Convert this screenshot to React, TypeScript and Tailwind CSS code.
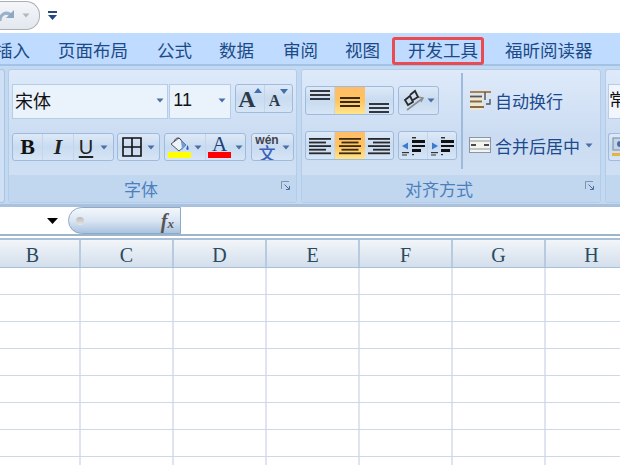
import React from "react";

const CJK = { fontFamily: '"Noto Sans CJK SC", "Liberation Sans", sans-serif' };
const SERIF = { fontFamily: '"Liberation Serif", serif' };

const Caret = ({ c = "#4a6fa5" }: { c?: string }) => (
  <svg width="8" height="5" viewBox="0 0 8 5" className="shrink-0"><path d="M0.5 0.5h7L4 4.5z" fill={c} /></svg>
);

const Btn = ({ children, w, on = false, edge = false }: { children?: React.ReactNode; w: string; on?: boolean; edge?: boolean }) => (
  <div className={`${w} h-full flex items-center justify-center shrink-0 ${on ? "bg-gradient-to-b from-[#ffbd69] via-[#ffc35e] to-[#ffe58a]" : ""} ${edge ? "border-r border-[#c2d5ec]" : ""}`}>{children}</div>
);

const Group = ({ children, cls = "" }: { children: React.ReactNode; cls?: string }) => (
  <div className={`h-[28px] flex items-center rounded-[3px] border border-[#9ebbdd] bg-gradient-to-b from-[#dde9f7] via-[#c9dbf0] to-[#d6e5f6] overflow-hidden shrink-0 ${cls}`}>{children}</div>
);

const Lines = ({ kind, heavy = false }: { kind: "l" | "c" | "r"; heavy?: boolean }) => {
  const rows = [0, 1, 2, 3, 4];
  return (
    <svg width="24" height="18" viewBox="0 0 24 18">
      {rows.map((i) => {
        const w = i % 2 === 0 ? 22 : 17;
        const x = kind === "l" ? 1 : kind === "c" ? 12 - w / 2 : 23 - w;
        return <rect key={i} x={x} y={i * 3.6 + 1} width={w} height="1.8" fill={heavy ? "#3a2a10" : "#26282c"} />;
      })}
    </svg>
  );
};

const VAlign = ({ pos, tone = "#33363c" }: { pos: "t" | "m" | "b"; tone?: string }) => (
  <div className={`h-full flex flex-col gap-[2px] ${pos === "t" ? "justify-start pt-[3px]" : pos === "m" ? "justify-center pt-[3px]" : "justify-end pb-[1px]"}`}>
    <div className="w-[20px] h-[2px]" style={{ background: tone }} />
    <div className="w-[20px] h-[2px]" style={{ background: tone }} />
    <div className="w-[20px] h-[2px]" style={{ background: tone }} />
  </div>
);

const Indent = ({ dir }: { dir: "l" | "r" }) => (
  <svg width="24" height="20" viewBox="0 0 24 20">
    <path d={dir === "l" ? "M1 10l6-3.5v7z" : "M8 10L2 6.5v7z"} fill="#3d7ad0" />
    <rect x="11" y="1" width="4" height="1.5" fill="#333" />
    <rect x="11" y="4" width="13" height="3" fill="#111" />
    <rect x="11" y="9" width="13" height="2" fill="#111" />
    <rect x="11" y="13" width="9" height="3" fill="#111" />
    <rect x="1" y="16" width="7" height="1.2" fill="#333" />
    <rect x="11" y="18" width="2" height="1.2" fill="#333" />
    <rect x="1" y="18.5" width="5" height="1" fill="#333" />
  </svg>
);

const Launcher = () => (
  <svg width="10" height="10" viewBox="0 0 10 10" className="shrink-0">
    <path d="M0.5 8V0.5H8" fill="none" stroke="#7f93ab" />
    <path d="M3.5 3.5L8 8M5 8.5h3.5V5" fill="none" stroke="#4a6f9f" />
  </svg>
);

const PanelLabel = ({ text, pad }: { text: string; pad: string }) => (
  <div className={`h-[27px] bg-[#c0d7ef] flex items-center justify-center relative rounded-b-[3px] ${pad}`} style={CJK}>
    <span className="text-[17px] text-[#4c80bd] leading-none">{text}</span>
    <div className="absolute right-[5px] top-[6px]"><Launcher /></div>
  </div>
);

const tabs: [string, string][] = [
  ["插入", "w-[35px] ml-[-5px] mr-[28px]"],
  ["页面布局", "w-[70px] mr-[29px]"],
  ["公式", "w-[35px] mr-[27px]"],
  ["数据", "w-[35px] mr-[29px]"],
  ["审阅", "w-[35px] mr-[27px]"],
  ["视图", "w-[35px] mr-[28px]"],
  ["开发工具", "w-[70px] mr-[27px]"],
  ["福昕阅读器", "w-[88px]"],
];

const cols = [
  ["B", "w-[81px] pr-[14px]"], ["C", "w-[93px]"], ["D", "w-[93px]"], ["E", "w-[93px]"], ["F", "w-[93px]"], ["G", "w-[93px]"], ["H", "w-[93px]"],
];

const cellCols = ["w-[81px]", "w-[93px]", "w-[93px]", "w-[93px]", "w-[93px]", "w-[93px]", "w-[93px]"];

export default function App() {
  return (
    <div className="w-[620px] h-[465px] overflow-hidden bg-white flex flex-col" style={CJK}>
      {/* quick access */}
      <div className="h-[33px] shrink-0 flex items-start bg-white">
        <div className="w-[40px] h-[29px] mt-px rounded-r-[14px] border border-l-0 border-[#aab0b8] bg-gradient-to-b from-[#f4f6f9] to-[#e3e8ef] flex items-center gap-[7px]">
          <svg width="15" height="15" viewBox="0 0 15 15"><path d="M0 13C0 6 6 3 11 7" fill="none" stroke="#9ab2c9" strokeWidth="3" /><path d="M14 2v8H6z" fill="#8ea8c2" /></svg>
          <Caret c="#b4b8bd" />
        </div>
        <div className="ml-[7px] mt-[11px] flex flex-col gap-[2px] items-center w-[10px]">
          <div className="w-[9px] h-[2px] bg-[#26477f]" />
          <svg width="9" height="5" viewBox="0 0 9 5"><path d="M0 0h9L4.5 5z" fill="#26477f" /></svg>
        </div>
      </div>

      {/* tabs */}
      <div className="h-[33px] shrink-0 bg-[#bfdbff] border-b-2 border-[#a3c2e8] flex items-center text-[#1c4a86] text-[17.5px] relative">
        {tabs.map(([t, c]) => (
          <div key={t} className={`${c} shrink-0 whitespace-nowrap leading-none pt-[2px]`}>{t}</div>
        ))}
        <div className="absolute left-[392px] top-[4px] w-[92px] h-[28px] border-[3px] border-[#ea4b50] rounded-[3px]" />
      </div>

      {/* ribbon */}
      <div className="h-[141px] shrink-0 bg-[#c3d9f2] border-b-[3px] border-[#a9c1dc] flex pt-[3px] pb-[1px] gap-[3px]">
        <div className="w-[5px] shrink-0 rounded-r-[3px] border border-l-0 border-[#a9c5e6] bg-[#cfe0f4]" />
        <div className="w-[289px] shrink-0 rounded-[3px] border border-[#b3cce8] bg-gradient-to-b from-[#deeafa] via-[#cbdcf2] to-[#d2e2f5] flex flex-col">
          <div className="flex-1 px-[3px] pt-[14px] flex flex-col gap-[14px]">
            <div className="flex items-start">
              <div className="w-[157px] h-[35px] bg-[#eaf2fc] border border-[#b6cde8] flex items-center justify-between pl-[2px] pr-[3px] pb-[3px] text-[18px] text-[#111]">
                <span className="leading-none">宋体</span><Caret />
              </div>
              <div className="w-[62px] h-[35px] ml-px bg-[#eaf2fc] border border-[#b6cde8] flex items-center justify-between pl-[3px] pr-[4px] pb-[3px] text-[18px] text-[#111]">
                <span className="leading-none" style={{ fontFamily: '"Liberation Sans", sans-serif' }}>11</span><Caret />
              </div>
              <Group cls="ml-[4px] h-[29px]">
                <Btn w="w-[29px]" edge>
                  <span className="text-[24px] font-bold leading-none text-[#2b3a4a]" style={SERIF}>A</span>
                  <svg width="8" height="5" viewBox="0 0 8 5" className="-mt-[16px] -ml-[2px]"><path d="M0 5h8L4 0z" fill="#3f6fae" /></svg>
                </Btn>
                <Btn w="w-[27px]">
                  <span className="text-[16px] font-bold leading-none text-[#2b3a4a] mt-[4px]" style={SERIF}>A</span>
                  <svg width="8" height="5" viewBox="0 0 8 5" className="-mt-[14px]"><path d="M0 0h8L4 5z" fill="#3f6fae" /></svg>
                </Btn>
              </Group>
            </div>
            <div className="flex items-center">
              <Group>
                <Btn w="w-[30px]" edge><span className="text-[22px] font-bold leading-none text-[#111]" style={SERIF}>B</span></Btn>
                <Btn w="w-[31px]" edge><span className="text-[22px] font-bold italic leading-none text-[#222]" style={SERIF}>I</span></Btn>
                <Btn w="w-[39px]">
                  <span className="text-[20px] underline underline-offset-2 leading-none text-[#222] mr-[7px]" style={{ fontFamily: '"Liberation Sans", sans-serif' }}>U</span><Caret />
                </Btn>
              </Group>
              <Group cls="ml-[3px]">
                <Btn w="w-[41px]">
                  <svg width="20" height="20" viewBox="0 0 20 20" className="mr-[5px]"><path d="M1 1h18v18H1zM10 1v18M1 10h18" fill="none" stroke="#111" strokeWidth="1.6" /></svg><Caret />
                </Btn>
              </Group>
              <Group cls="ml-[4px]">
                <Btn w="w-[41px]" edge>
                  <div className="flex flex-col items-center mr-[3px]">
                    <svg width="23" height="16" viewBox="0 0 23 16"><path d="M3 8l8-6 7 7-7 6z" fill="#eef3f8" stroke="#556" /><path d="M6 6c1-5 7-6 8 1" fill="none" stroke="#445" /><path d="M13 4l5 5-4 5z" fill="#6f9fd8" /><path d="M19.5 9c1.5 3 1.5 5 0 5s-1.5-2 0-5z" fill="#2f62b5" /></svg>
                    <div className="w-[23px] h-[6px] bg-[#ffff00]" />
                  </div>
                  <Caret />
                </Btn>
                <Btn w="w-[39px]">
                  <div className="flex flex-col items-center mr-[4px]">
                    <span className="text-[21px] leading-[16px] text-[#1c3f7a] h-[16px]" style={SERIF}>A</span>
                    <div className="w-[23px] h-[6px] bg-[#ff0000]" />
                  </div>
                  <Caret />
                </Btn>
              </Group>
              <Group cls="ml-[5px]">
                <Btn w="w-[41px]">
                  <div className="flex flex-col items-center mr-[3px] w-[24px]">
                    <span className="text-[12px] font-bold leading-[10px] text-[#3f444c]" style={{ fontFamily: '"Liberation Sans", sans-serif' }}>wén</span>
                    <span className="text-[17px] leading-[15px] font-medium text-[#3b62b8]">文</span>
                  </div>
                  <Caret />
                </Btn>
              </Group>
            </div>
          </div>
          <PanelLabel text="字体" pad="pr-[23px]" />
        </div>
        <div className="w-[300px] ml-[1px] shrink-0 rounded-[3px] border border-[#b3cce8] bg-gradient-to-b from-[#deeafa] via-[#cbdcf2] to-[#d2e2f5] flex flex-col">
          <div className="flex-1 pl-[3px] pt-[15px] flex">
            <div className="flex flex-col gap-[16px] w-[155px] shrink-0 pt-[1px]">
              <div className="flex items-center gap-[3px]">
                <Group cls="h-[29px]">
                  <Btn w="w-[29px]" edge><VAlign pos="t" /></Btn>
                  <Btn w="w-[30px]" on><VAlign pos="m" tone="#3a2a10" /></Btn>
                  <Btn w="w-[28px]"><VAlign pos="b" /></Btn>
                </Group>
                <Group cls="ml-[1px] h-[29px]">
                  <Btn w="w-[39px]">
                    <svg width="24" height="24" viewBox="0 0 24 24" className="mr-[1px]"><path d="M5 21L21 9" stroke="#8a8f96" strokeWidth="1.6" /><path d="M16 8l5 1-2 4" fill="none" stroke="#8a8f96" strokeWidth="1.4" /><path d="M3 11l5-4 3 6-5 3zM8 6l5-4 3 6-5 3" fill="none" stroke="#2a2a2a" strokeWidth="1.8" /></svg>
                    <Caret />
                  </Btn>
                </Group>
              </div>
              <div className="flex items-center gap-[3px]">
                <Group cls="h-[29px]">
                  <Btn w="w-[29px]" edge><Lines kind="l" /></Btn>
                  <Btn w="w-[30px]" on><Lines kind="c" heavy /></Btn>
                  <Btn w="w-[28px]"><Lines kind="r" /></Btn>
                </Group>
                <Group cls="ml-[1px] h-[29px]">
                  <Btn w="w-[29px]" edge><Indent dir="l" /></Btn>
                  <Btn w="w-[28px]"><Indent dir="r" /></Btn>
                </Group>
              </div>
            </div>
            <div className="w-[2px] h-[96px] -mt-[12px] ml-[1px] bg-[#9fbbdb] shrink-0" />
            <div className="flex flex-col pl-[6px] gap-[15px] text-[#1c4a8e] text-[17px]">
              <div className="h-[30px] flex items-center whitespace-nowrap gap-[3px]">
                <svg width="23" height="22" viewBox="0 0 23 22"><path d="M1 6h13v15H1z" fill="#eee7d4" /><path d="M1 3h21" stroke="#a06a20" strokeWidth="1.6" /><path d="M1 7.5h12" stroke="#555" strokeWidth="1.8" /><path d="M1 12.5h12M1 18h14" stroke="#8a6a40" strokeWidth="2" /><path d="M16 3v8M21 10v5h-4" fill="none" stroke="#555" strokeWidth="1.4" /></svg>
                <span className="leading-none">自动换行</span>
              </div>
              <div className="h-[30px] flex items-center whitespace-nowrap">
                <svg width="22" height="16" viewBox="0 0 22 16"><rect x=".5" y=".5" width="21" height="15" fill="#f4f4ee" stroke="#8796a8" /><path d="M1 4h20M1 12h20" stroke="#8796a8" /><path d="M2 8h5M15 8h5" stroke="#111" strokeWidth="1.4" /></svg>
                <span className="leading-none ml-[4px] mr-[5px]">合并后居中</span>
                <Caret />
              </div>
            </div>
          </div>
          <PanelLabel text="对齐方式" pad="pr-[24px]" />
        </div>
        <div className="flex-1 ml-[1px] rounded-l-[3px] border border-r-0 border-[#b3cce8] bg-gradient-to-b from-[#deeafa] via-[#cbdcf2] to-[#d2e2f5] flex flex-col">
          <div className="flex-1 pt-[14px] pl-[2px] flex flex-col gap-[14px] overflow-hidden">
            <div className="h-[35px] w-[15px] bg-[#f2f6fc] border border-r-0 border-[#b6cde8] text-[17px] text-[#111] leading-[28px] overflow-hidden whitespace-nowrap">常</div>
            <Group cls="rounded-r-none border-r-0">
              <svg width="20" height="22" viewBox="0 0 20 22"><rect x="4" y="2" width="16" height="12" fill="#c5d5e8" stroke="#7a8aa0" /><circle cx="11" cy="8" r="3" fill="#4a6fa5" /><rect x="3" y="17" width="17" height="3" fill="#e5b53a" /></svg>
            </Group>
          </div>
          <div className="h-[27px] bg-[#c0d7ef]" />
        </div>
      </div>

      {/* formula bar */}
      <div className="h-[29px] shrink-0 flex items-end bg-white border-b-2 border-[#9fb5cc]">
        <div className="w-[68px] h-[27px] flex items-center justify-end pr-[10px]">
          <svg width="11" height="6" viewBox="0 0 11 6"><path d="M0 0h11L5.5 6z" fill="#000" /></svg>
        </div>
        <div className="w-[113px] h-[27px] rounded-l-[14px] border border-[#8da9c7] bg-gradient-to-b from-[#f3f7fc] via-[#dbe6f3] to-[#a9c3e0] flex items-center justify-between pl-[7px] pr-[6px]">
          <div className="w-[8px] h-[8px] rounded-full bg-gradient-to-b from-[#bbb] to-[#e6e6e6]" />
          <span className="italic font-bold text-[20px] text-[#555] leading-none" style={SERIF}>f<span className="text-[13px]">x</span></span>
        </div>
      </div>

      <div className="h-[2px] shrink-0 bg-white" />

      {/* column header */}
      <div className="h-[30px] shrink-0 flex bg-gradient-to-b from-[#f2f5f9] to-[#d3dfec] border-t-2 border-b border-[#a9bfd7]">
        {cols.map(([l, w]) => (
          <div key={l} className={`${w} shrink-0 border-r-2 border-[#b7cbe0] flex items-center justify-center text-[20px] text-[#2a4a60] leading-none pt-[2px]`} style={SERIF}>{l}</div>
        ))}
      </div>

      {/* cells */}
      <div className="flex-1 flex flex-col">
        {[0, 1, 2, 3, 4, 5, 6, 7].map((r) => (
          <div key={r} className="h-[27px] shrink-0 flex border-b border-[#d0d7e5]">
            {cellCols.map((w, i) => (
              <div key={i} className={`${w} shrink-0 border-r-2 border-[#dfe4f0]`} />
            ))}
          </div>
        ))}
      </div>
    </div>
  );
}
